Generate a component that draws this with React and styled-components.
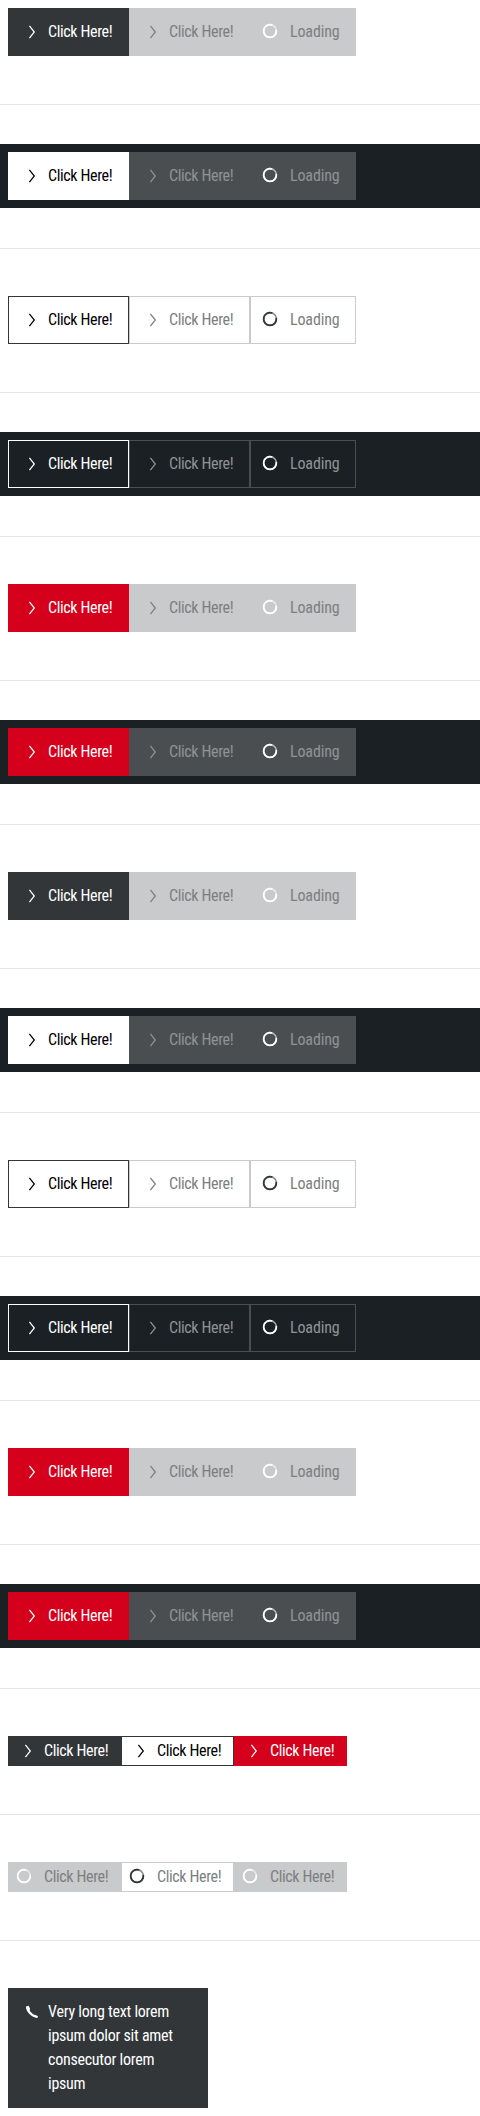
import React from 'react';
import styled, { createGlobalStyle, css } from 'styled-components';

const GlobalStyle = createGlobalStyle`
  *, *::before, *::after { box-sizing: border-box; }
  body {
    margin: 0;
    background: #fff;
    font-family: Roboto, 'Liberation Sans', sans-serif;
    font-stretch: 79%;
    font-weight: 370;
    font-size: 16px;
    line-height: 24px;
  }
`;

const Panel = styled.section`
  display: flex;
  align-items: flex-start;
  padding: 8px;
  background: ${(p) => (p.$dark ? '#1b2024' : 'transparent')};
`;

const Divider = styled.hr`
  height: 1px;
  margin: 40px 0 39px;
  border: 0;
  background: #e3e4e5;
`;

const skins = {
  primary: { light: ['#323639', '#323639', '#fff'], dark: ['#fff', '#fff', '#000'] },
  outline: { light: ['transparent', '#323639', '#000'], dark: ['transparent', '#fff', '#fff'] },
  brand: { light: ['#d5001c', '#d5001c', '#fff'], dark: ['#d5001c', '#d5001c', '#fff'] },
};

const idle = { light: ['#c9cacb', '#7c7f81'], dark: ['#4a4e51', '#909395'] };

const skinOf = ({ $variant, $dark, $disabled }) => {
  const theme = $dark ? 'dark' : 'light';
  const [fill, border, text] = skins[$variant][theme];
  if (!$disabled) return css`background: ${fill}; border-color: ${border}; color: ${text};`;
  const [idleFill, idleText] = idle[theme];
  return css`
    background: ${$variant === 'outline' ? 'transparent' : idleFill};
    border-color: ${idleFill};
    color: ${idleText};
  `;
};

const ButtonBox = styled.button`
  display: flex;
  align-items: flex-start;
  flex: none;
  width: ${(p) => p.$width}px;
  margin: 0;
  padding: ${(p) => (p.$small ? '2px 0 2px 7px' : '11px 15px 11px 11px')};
  border: 1px solid;
  font: inherit;
  font-stretch: inherit;
  text-align: left;
  ${skinOf}
`;

const Label = styled.span`
  flex: 1;
  padding-left: 4px;
  letter-spacing: ${(p) => p.$tracking}px;
  white-space: ${(p) => (p.$wrap ? 'normal' : 'nowrap')};
`;

const Icon = styled.svg`
  flex: none;
  display: block;
  width: 24px;
  height: 24px;
`;

const LoaderIcon = styled(Icon)`
  margin: -1px 4px 0 -4px;
  color: ${(p) => (p.$ink ? '#323639' : '#fff')};
`;

const Chevron = () => (
  <Icon viewBox="0 0 24 24" fill="none" stroke="currentColor" strokeWidth="1.25">
    <path d="M9.4 5.9 14.3 12 9.4 18.1" />
  </Icon>
);

const Phone = () => (
  <Icon viewBox="0 0 24 24" fill="currentColor">
    <path d="M6 6.6 8.6 5.8 10 8.6 9.7 10.5C10.8 12.2 12 13.5 14.1 14.8L15.6 14.9 18 16.2 17.4 18C12.3 18.3 5.6 11.7 6 6.6Z" />
  </Icon>
);

const Loader = ({ ink }) => (
  <LoaderIcon $ink={ink} viewBox="0 0 24 24" fill="none" stroke="currentColor">
    <circle cx="12" cy="12" r="6.4" strokeWidth="1.6" opacity=".6" />
    <path d="M14.2 6A6.4 6.4 0 1 0 18.3 10.9" strokeWidth="1.7" />
  </LoaderIcon>
);

function Button({ variant, dark, disabled, loading, small, icon, wrap, width = 121, tracking = -0.36, children }) {
  return (
    <ButtonBox $variant={variant} $dark={dark} $disabled={disabled || loading} $small={small} $width={width}>
      {loading ? <Loader ink={variant === 'outline' && !dark} /> : icon || <Chevron />}
      <Label $tracking={tracking} $wrap={wrap}>{children}</Label>
    </ButtonBox>
  );
}

const states = ['primary', 'outline', 'brand', 'primary', 'outline', 'brand'].flatMap((variant) => [
  { variant, dark: false },
  { variant, dark: true },
]);

const variants = ['primary', 'outline', 'brand'];

export default function App() {
  return (
    <main>
      <GlobalStyle />
      {states.map(({ variant, dark }, i) => (
        <React.Fragment key={i}>
          <Panel $dark={dark}>
            <Button variant={variant} dark={dark}>Click Here!</Button>
            <Button variant={variant} dark={dark} disabled>Click Here!</Button>
            <Button variant={variant} dark={dark} loading width={106} tracking={-0.14}>Loading</Button>
          </Panel>
          <Divider />
        </React.Fragment>
      ))}
      {[false, true].map((loading) => (
        <React.Fragment key={String(loading)}>
          <Panel>
            {variants.map((variant) => (
              <Button key={variant} variant={variant} loading={loading} small width={113}>Click Here!</Button>
            ))}
          </Panel>
          <Divider />
        </React.Fragment>
      ))}
      <Panel>
        <Button variant="primary" icon={<Phone />} wrap width={200} tracking={-0.25}>
          Very long text lorem ipsum dolor sit amet consecutor lorem ipsum
        </Button>
      </Panel>
    </main>
  );
}
